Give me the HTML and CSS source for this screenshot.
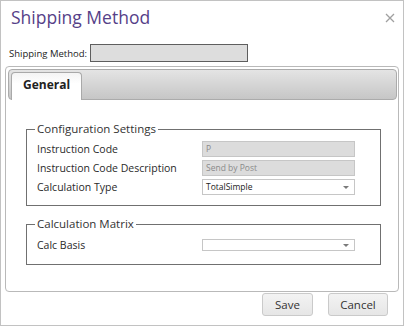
FILE: index.html
```html
<!DOCTYPE html>
<html>
<head>
<meta charset="utf-8">
<link rel="stylesheet" href="styles.css">
</head>
<body>
<div class="dialog">
  <div class="titlebar">
    <h1 class="title">Shipping Method</h1>
    <svg class="close" width="10" height="10" viewBox="0 0 10 10"><path d="M1 1 L9 9 M9 1 L1 9" stroke="#a0a0a0" stroke-width="1.3" fill="none"/></svg>
  </div>
  <div class="method-row">
    <span class="method-label">Shipping Method:</span>
    <span class="method-input"></span>
  </div>
  <div class="panel">
    <div class="tabstrip">
      <div class="tab">General</div>
    </div>
    <div class="tabcontent">
      <fieldset class="group group-config">
        <legend>Configuration Settings</legend>
        <div class="form-grid">
          <span class="label">Instruction Code</span>
          <span class="field readonly">P</span>
          <span class="label">Instruction Code Description</span>
          <span class="field readonly">Send by Post</span>
          <span class="label">Calculation Type</span>
          <span class="field select">TotalSimple<span class="arrow"></span></span>
        </div>
      </fieldset>
      <fieldset class="group group-matrix">
        <legend>Calculation Matrix</legend>
        <div class="form-grid">
          <span class="label">Calc Basis</span>
          <span class="field select empty"><span class="arrow"></span></span>
        </div>
      </fieldset>
    </div>
  </div>
  <div class="buttons">
    <button class="btn btn-save">Save</button>
    <button class="btn btn-cancel">Cancel</button>
  </div>
</div>
</body>
</html>
```

FILE: styles.css
```css
html, body {
  margin: 0;
  padding: 0;
  background: #ffffff;
}
body {
  font-family: "Open Sans", "Noto Sans", sans-serif;
  color: #333333;
}
.dialog {
  box-sizing: border-box;
  width: 404px;
  height: 326px;
  border: 1px solid #c2c2c2;
  background: #ffffff;
  display: flex;
  flex-direction: column;
}
.titlebar {
  display: flex;
  align-items: center;
  justify-content: space-between;
  padding: 5px 8px 0 10px;
  height: 22px;
}
.title {
  margin: 0;
  font-size: 17.5px;
  line-height: 22px;
  font-weight: 400;
  color: #563f88;
}
.close {
  display: block;
  margin-top: 2px;
}
.method-row {
  display: flex;
  align-items: center;
  margin-top: 16px;
  padding-left: 8px;
  height: 18px;
}
.method-label {
  font-size: 9.5px;
  color: #222222;
  width: 81px;
}
.method-input {
  box-sizing: border-box;
  width: 158px;
  height: 18px;
  border: 1px solid #5e5e5e;
  background: #dddddd;
}
.panel {
  box-sizing: border-box;
  margin: 4px 4px 0 4px;
  height: 226px;
  border: 1px solid #b9b9b9;
  border-radius: 4px;
  padding: 2px 1px 0 2px;
  display: flex;
  flex-direction: column;
}
.tabstrip {
  box-sizing: border-box;
  height: 31px;
  border: 1px solid #ababab;
  border-radius: 4px;
  background: linear-gradient(#e4e4e4, #c6c6c6);
  padding: 2px 0 0 2px;
  display: flex;
  align-items: flex-start;
}
.tab {
  box-sizing: border-box;
  width: 71px;
  height: 28px;
  border: 1px solid #a9a9a9;
  border-bottom: none;
  border-radius: 4px 4px 0 0;
  background: linear-gradient(#f4f4f4, #ffffff 40%);
  font-size: 12px;
  line-height: 16px;
  font-weight: 700;
  color: #222222;
  padding: 4px 0 0 11px;
}
.tabcontent {
  flex: 1;
  padding-top: 21px;
}
.group {
  box-sizing: border-box;
  width: 355px;
  margin: 0 0 0 18px;
  border: 1px solid #707070;
  padding: 4px 10px 10px 10px;
}
.group legend {
  font-size: 11.5px;
  line-height: 16px;
  color: #333333;
  padding: 0 2px;
  margin-left: -2px;
}
.group-matrix {
  margin-top: 10px;
  padding-top: 5px;
  padding-bottom: 11px;
}
.form-grid {
  display: grid;
  grid-template-columns: 165px 153px;
  grid-auto-rows: 16px;
  row-gap: 3px;
  align-items: center;
}
.label {
  font-size: 10.5px;
  color: #2a2a2a;
  white-space: nowrap;
}
.field {
  box-sizing: border-box;
  height: 16px;
  border: 1px solid #c6c6c6;
  font-size: 8.5px;
  line-height: 14px;
  padding-left: 3px;
  position: relative;
}
.readonly {
  background: #dcdcdc;
  color: #8a8a8a;
}
.select {
  background: #ffffff;
  color: #222222;
}
.select.empty {
  height: 12px;
}
.arrow {
  position: absolute;
  right: 5px;
  top: 50%;
  margin-top: -1px;
  width: 0;
  height: 0;
  border-left: 3px solid transparent;
  border-right: 3px solid transparent;
  border-top: 3px solid #7a7a7a;
}
.buttons {
  display: flex;
  justify-content: flex-end;
  gap: 15px;
  padding-right: 15px;
  margin-top: 1px;
}
.btn {
  box-sizing: border-box;
  height: 23px;
  border: 1px solid #cacaca;
  border-radius: 3px;
  background: linear-gradient(#f3f3f3, #e6e6e6);
  font-family: "Open Sans", "Noto Sans", sans-serif;
  font-size: 11.5px;
  color: #333333;
  padding: 0;
}
.btn-save {
  width: 51px;
}
.btn-cancel {
  width: 60px;
}
```
